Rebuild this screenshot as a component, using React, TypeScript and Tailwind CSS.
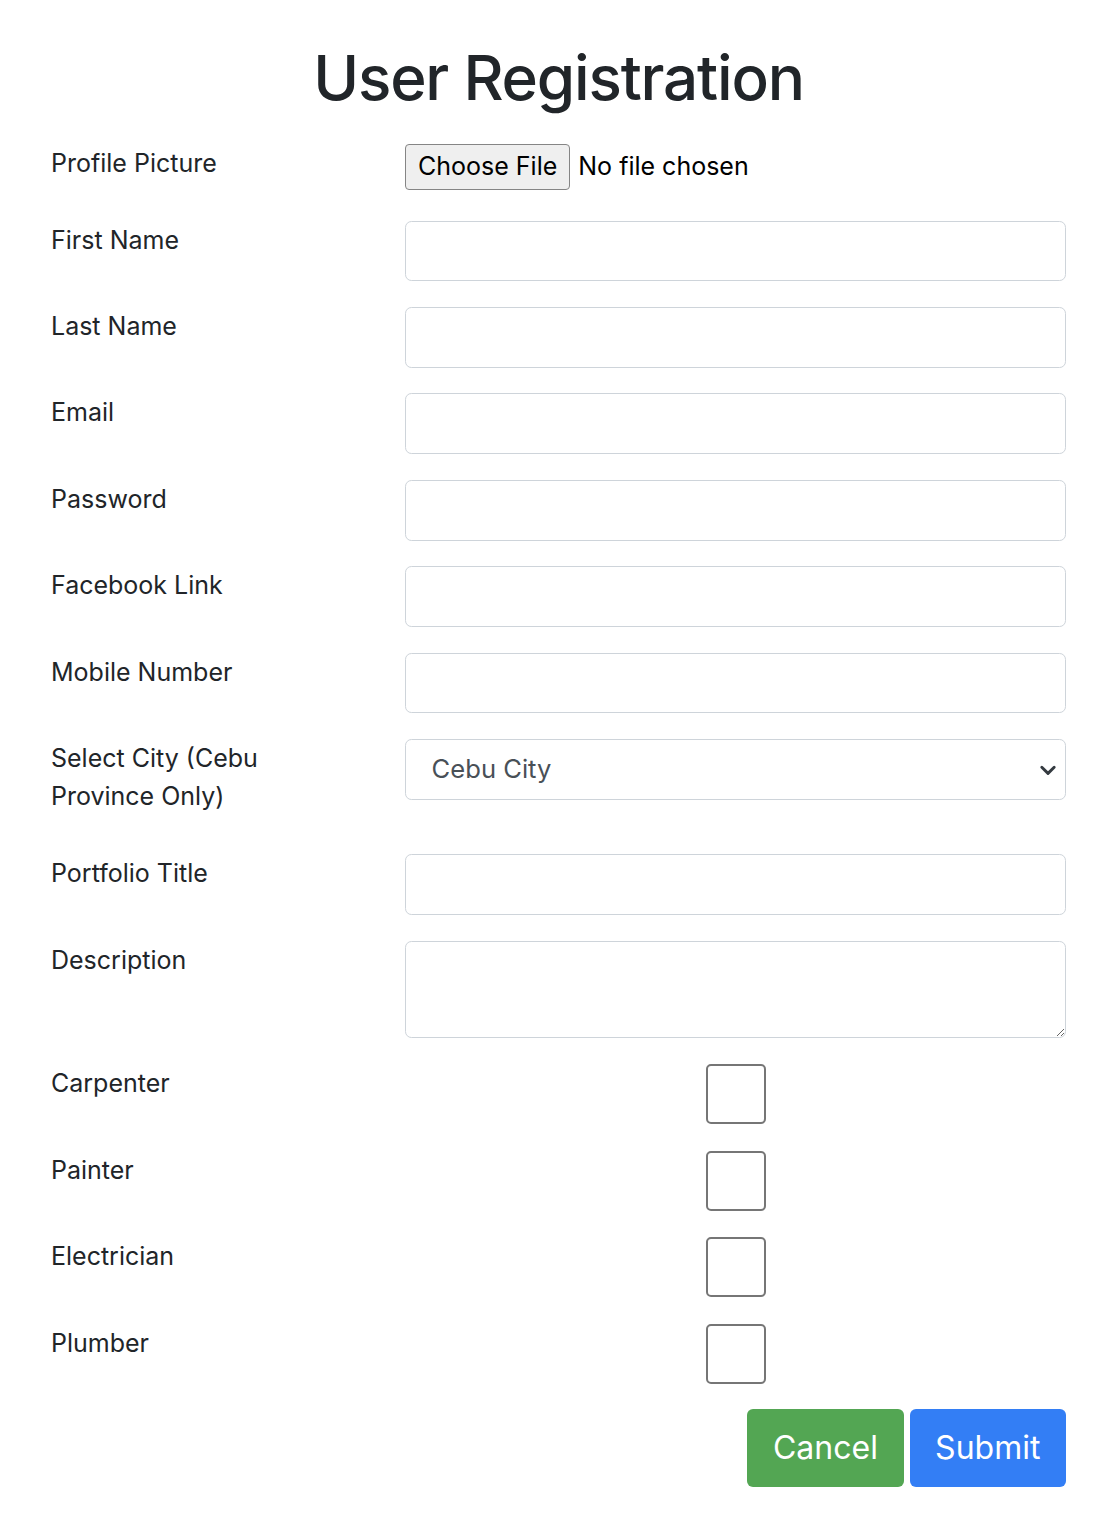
const fields = ['First Name', 'Last Name', 'Email', 'Password', 'Facebook Link', 'Mobile Number']

const trades = ['Carpenter', 'Painter', 'Electrician', 'Plumber']

function Label({ children }: { children: React.ReactNode }) {
  return <label className="mb-[12.8px] block pr-[20px] text-[25px] leading-[38.4px] text-[#212529]">{children}</label>
}

function TextInput({ type = 'text' }: { type?: string }) {
  return (
    <input
      type={type}
      className="block h-[60.8px] w-full rounded-[6.4px] border-[1.6px] border-[#ced4da] bg-white px-[19.2px] text-[25.6px] text-[#495057] outline-none"
    />
  )
}

export default function App() {
  return (
    <main className="min-h-[1516px] bg-white font-['Inter','Liberation_Sans',sans-serif] text-[#212529]">
      <div className="ml-[51px] w-[1015px] pt-[40px]">
        <h1 className="mb-[27px] text-center text-[62px] font-medium leading-[76.8px] tracking-[-1.2px] text-[#212529]">User Registration</h1>

        <form className="flex flex-col">
          <div className="mb-[25.6px] grid grid-cols-[354px_1fr]">
            <Label>Profile Picture</Label>
            <div className="flex items-center gap-[8px] self-start">
              <span className="flex h-[46px] items-center rounded-[4px] border-[1.6px] border-[#858585] bg-[#efefef] px-[12px] text-[25px] text-black">
                Choose File
              </span>
              <span className="text-[25px] text-black">No file chosen</span>
            </div>
          </div>

          {fields.map((name) => (
            <div key={name} className="mb-[25.6px] grid grid-cols-[354px_1fr]">
              <Label>{name}</Label>
              <TextInput type={name === 'Password' ? 'password' : 'text'} />
            </div>
          ))}

          <div className="mb-[25.6px] grid grid-cols-[354px_1fr]">
            <Label>
              Select City (Cebu
              <br />
              Province Only)
            </Label>
            <div className="relative h-[60.8px] rounded-[6.4px] border-[1.6px] border-[#ced4da] bg-white">
              <div className="flex h-full items-center pl-[25.6px] text-[25.6px] text-[#495057]">Cebu City</div>
              <svg className="absolute right-[8px] top-[21px] size-[18px]" viewBox="0 0 16 16">
                <path d="M2.5 5.5 8 11l5.5-5.5" fill="none" stroke="#343a40" strokeWidth="2.6" strokeLinecap="round" strokeLinejoin="round" />
              </svg>
            </div>
          </div>

          <div className="mb-[25.6px] grid grid-cols-[354px_1fr]">
            <Label>Portfolio Title</Label>
            <TextInput />
          </div>

          <div className="mb-[26.5px] grid grid-cols-[354px_1fr]">
            <Label>Description</Label>
            <textarea className="block h-[97px] w-full rounded-[6.4px] border-[1.6px] border-[#ced4da] bg-white px-[19.2px] text-[25.6px] outline-none" />
          </div>

          {trades.map((trade, i) => (
            <div key={trade} className={`grid grid-cols-[354px_1fr] ${i === trades.length - 1 ? 'mb-[25px]' : 'mb-[26.7px]'}`}>
              <Label>{trade}</Label>
              <div className="flex justify-center">
                <span className="block size-[60px] rounded-[5px] border-2 border-[#767676] bg-white" />
              </div>
            </div>
          ))}

          <div className="flex justify-end gap-[6px]">
            <button type="button" className="h-[78px] rounded-[6px] bg-[#53a653] px-[25.6px] text-[32px] text-white">
              Cancel
            </button>
            <button type="button" className="h-[78px] rounded-[6px] bg-[#337ef5] px-[25.6px] text-[32px] text-white">
              Submit
            </button>
          </div>
        </form>
      </div>
    </main>
  )
}
